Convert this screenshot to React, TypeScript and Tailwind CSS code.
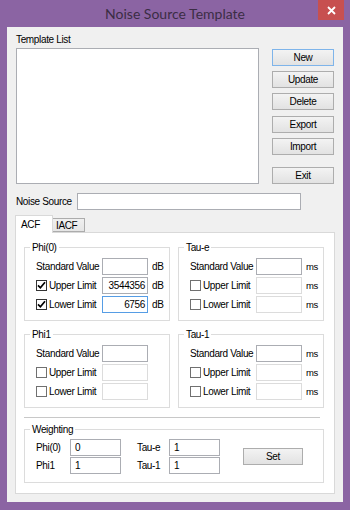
import React from 'react';

type FieldProps = { w: string; value?: string; right?: boolean; disabled?: boolean; focus?: boolean };

const Field = ({ w, value = '', right = false, disabled = false, focus = false }: FieldProps) => (
  <div
    className={`h-[17px] ${w} shrink-0 border bg-white flex items-center ${
      focus ? 'border-[#569de5]' : disabled ? 'border-[#dcdcdc]' : 'border-[#abadb3]'
    } ${right ? 'justify-end pr-[2px]' : 'pl-[4px]'}`}
  >
    {value}
  </div>
);

const Check = ({ checked }: { checked: boolean }) => (
  <div
    className={`w-[11px] h-[11px] shrink-0 border bg-white flex items-center justify-center ${
      checked ? 'border-[#333333]' : 'border-[#707070]'
    }`}
  >
    {checked && (
      <svg width="9" height="9" viewBox="0 0 9 9">
        <path d="M1 4.3 L3.4 6.8 L8 1.2" fill="none" stroke="#000" strokeWidth="1.7" />
      </svg>
    )}
  </div>
);

const Btn = ({ label, primary = false, className = '' }: { label: string; primary?: boolean; className?: string }) => (
  <div
    className={`h-[17px] w-[62px] flex items-center justify-center border bg-linear-to-b from-[#f3f3f3] to-[#e2e2e2] ${
      primary ? 'border-[#7eb4ea]' : 'border-[#adadad]'
    } ${className}`}
  >
    {label}
  </div>
);

const Group = ({ title, className = '', children }: { title: string; className?: string; children: React.ReactNode }) => (
  <div className={`border border-[#dcdcdc] ${className}`}>
    <div className="-mt-[7px] ml-[5px] h-[13px] leading-[13px] px-[2px] bg-white w-fit">{title}</div>
    {children}
  </div>
);

type RowProps = { label: string; unit: string; check?: boolean; value?: string; focus?: boolean };

const Row = ({ label, unit, check, value = '', focus = false }: RowProps) => (
  <div className="h-[19px] flex items-center pl-[11px]">
    <div className="w-[66px] flex items-center">
      {check !== undefined && <Check checked={check} />}
      <span className={check !== undefined ? 'ml-[2px]' : ''}>{label}</span>
    </div>
    <Field w="w-[46px]" value={value} right disabled={check === false} focus={focus} />
    <span className={`ml-[4px] ${unit === 'ms' ? 'text-[9.5px]' : ''}`}>{unit}</span>
  </div>
);

const Block = ({ title, unit, rows, className = '' }: { title: string; unit: string; rows: RowProps[]; className?: string }) => (
  <Group title={title} className={`w-[146px] pb-[6px] ${className}`}>
    <div className="mt-[3px]">
      {rows.map((r) => (
        <Row key={r.label} {...r} unit={unit} />
      ))}
    </div>
  </Group>
);

export default function App() {
  return (
    <div className="w-[350px] h-[510px] bg-[#8b64a3] flex flex-col font-['Liberation_Sans',Arial,sans-serif] text-black">
      {/* title bar */}
      <div className="h-[27px] relative flex items-center justify-center">
        <span className="font-['Lato',sans-serif] text-[14px] text-[#3b2d45] -mt-[1px]">Noise Source Template</span>
        <div className="absolute right-[6px] top-0 w-[26px] h-[20px] bg-[#c75050] flex items-center justify-center">
          <svg width="9" height="9" viewBox="0 0 9 9">
            <path d="M1 1 L8 8 M8 1 L1 8" stroke="#fff" strokeWidth="1.8" />
          </svg>
        </div>
      </div>

      {/* client */}
      <div className="mx-[7px] h-[475px] bg-[#f0f0f0] pl-[9px] pt-[6px] text-[10px] tracking-[-0.35px] leading-[13px]">
        <div className="h-[13px]">Template List</div>
        <div className="flex mt-[2px]">
          <div className="w-[243px] h-[136px] border border-[#abadb3] bg-white" />
          <div className="ml-[13px] mt-[1px] flex flex-col">
            <Btn label="New" primary />
            <Btn label="Update" className="mt-[5px]" />
            <Btn label="Delete" className="mt-[5px]" />
            <Btn label="Export" className="mt-[6px]" />
            <Btn label="Import" className="mt-[5px]" />
            <Btn label="Exit" className="mt-[12px]" />
          </div>
        </div>

        <div className="flex items-center mt-[9px]">
          <span className="w-[61px]">Noise Source</span>
          <Field w="w-[224px]" />
        </div>

        {/* tabs */}
        <div className="-ml-[1px] mt-[5px] flex items-end h-[17px]">
          <div className="relative z-10 w-[38px] h-[18px] -mb-[1px] border border-b-0 border-[#d9d9d9] bg-white pl-[5px] pt-[2px]">
            ACF
          </div>
          <div className="w-[32px] h-[14px] border border-l-0 border-[#acacac] bg-linear-to-b from-[#f0f0f0] to-[#e5e5e5] pl-[3px]">
            IACF
          </div>
        </div>
        <div className="-ml-[1px] w-[320px] h-[262px] border border-[#d9d9d9] bg-white pl-[8px] pt-[14px]">
          <div className="flex">
            <Block
              title="Phi(0)"
              unit="dB"
              rows={[
                { label: 'Standard Value', unit: 'dB' },
                { label: 'Upper Limit', unit: 'dB', check: true, value: '3544356' },
                { label: 'Lower Limit', unit: 'dB', check: true, value: '6756', focus: true },
              ]}
            />
            <Block
              title="Tau-e"
              unit="ms"
              className="ml-[8px]"
              rows={[
                { label: 'Standard Value', unit: 'ms' },
                { label: 'Upper Limit', unit: 'ms', check: false },
                { label: 'Lower Limit', unit: 'ms', check: false },
              ]}
            />
          </div>
          <div className="flex mt-[13px]">
            <Block
              title="Phi1"
              unit=""
              rows={[
                { label: 'Standard Value', unit: '' },
                { label: 'Upper Limit', unit: '', check: false },
                { label: 'Lower Limit', unit: '', check: false },
              ]}
            />
            <Block
              title="Tau-1"
              unit="ms"
              className="ml-[8px]"
              rows={[
                { label: 'Standard Value', unit: 'ms' },
                { label: 'Upper Limit', unit: 'ms', check: false },
                { label: 'Lower Limit', unit: 'ms', check: false },
              ]}
            />
          </div>

          <div className="mt-[9px] w-[296px] border-t border-[#c8c8c8]" />

          <Group title="Weighting" className="mt-[11px] w-[300px] pb-[8px]">
            <div className="mt-[2px] pl-[11px] flex items-center">
              <div className="grid grid-cols-[34px_51px_16px_32px_51px] grid-rows-[18px_18px] items-center">
                <span>Phi(0)</span>
                <Field w="w-[51px]" value="0" />
                <span />
                <span>Tau-e</span>
                <Field w="w-[51px]" value="1" />
                <span>Phi1</span>
                <Field w="w-[51px]" value="1" />
                <span />
                <span>Tau-1</span>
                <Field w="w-[51px]" value="1" />
              </div>
              <div className="ml-[23px] h-[17px] w-[60px] flex items-center justify-center border border-[#adadad] bg-linear-to-b from-[#f3f3f3] to-[#e2e2e2]">
                Set
              </div>
            </div>
          </Group>
        </div>
      </div>
    </div>
  );
}
